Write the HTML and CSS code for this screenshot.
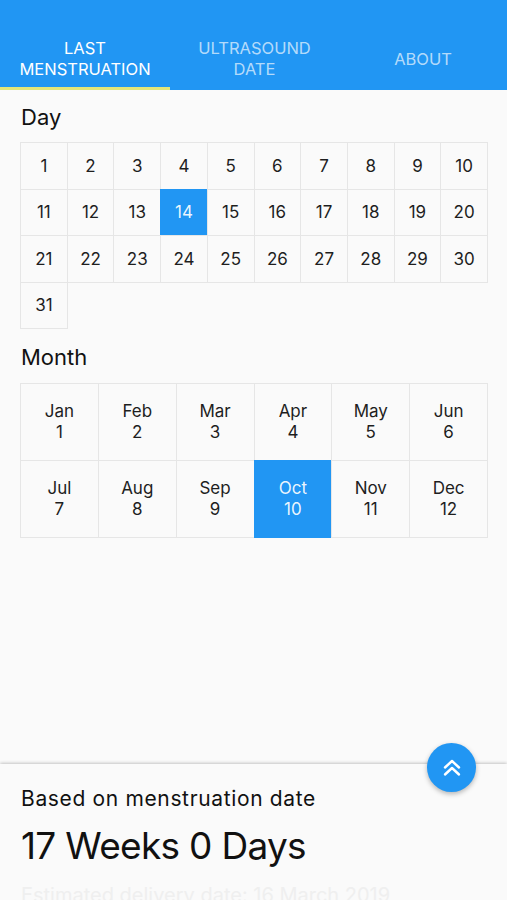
FILE: index.html
```html
<!DOCTYPE html>
<html lang="en">
<head>
<meta charset="utf-8">
<title>Pregnancy Calculator</title>
<link rel="stylesheet" href="styles.css">
</head>
<body>
<div class="app">
  <header class="tabs">
    <div class="tab active">LAST<br>MENSTRUATION</div>
    <div class="tab">ULTRASOUND<br>DATE</div>
    <div class="tab">ABOUT</div>
  </header>
  <main class="content">
    <div class="label label-day">Day</div>
    <div class="day-grid">
      <div class="cell">1</div><div class="cell">2</div><div class="cell">3</div><div class="cell">4</div><div class="cell">5</div>
      <div class="cell">6</div><div class="cell">7</div><div class="cell">8</div><div class="cell">9</div><div class="cell">10</div>
      <div class="cell">11</div><div class="cell">12</div><div class="cell">13</div><div class="cell selected">14</div><div class="cell">15</div>
      <div class="cell">16</div><div class="cell">17</div><div class="cell">18</div><div class="cell">19</div><div class="cell">20</div>
      <div class="cell">21</div><div class="cell">22</div><div class="cell">23</div><div class="cell">24</div><div class="cell">25</div>
      <div class="cell">26</div><div class="cell">27</div><div class="cell">28</div><div class="cell">29</div><div class="cell">30</div>
      <div class="cell">31</div>
    </div>
    <div class="label label-month">Month</div>
    <div class="month-grid">
      <div class="cell month"><span>Jan</span><span>1</span></div>
      <div class="cell month"><span>Feb</span><span>2</span></div>
      <div class="cell month"><span>Mar</span><span>3</span></div>
      <div class="cell month"><span>Apr</span><span>4</span></div>
      <div class="cell month"><span>May</span><span>5</span></div>
      <div class="cell month"><span>Jun</span><span>6</span></div>
      <div class="cell month"><span>Jul</span><span>7</span></div>
      <div class="cell month"><span>Aug</span><span>8</span></div>
      <div class="cell month"><span>Sep</span><span>9</span></div>
      <div class="cell month selected"><span>Oct</span><span>10</span></div>
      <div class="cell month"><span>Nov</span><span>11</span></div>
      <div class="cell month"><span>Dec</span><span>12</span></div>
    </div>
  </main>
  <footer class="result">
    <button class="fab" aria-label="Expand">
      <svg width="20" height="18" viewBox="0 0 20 18" fill="none" stroke="#fff" stroke-width="2.4" stroke-linecap="round" stroke-linejoin="round">
        <path d="M3 8.5 L10 2 L17 8.5"/>
        <path d="M3 15.5 L10 9 L17 15.5"/>
      </svg>
    </button>
    <div class="based">Based on menstruation date</div>
    <div class="weeks">17 Weeks 0 Days</div>
    <div class="faded">Estimated delivery date: 16 March 2019</div>
  </footer>
</div>
</body>
</html>
```
FILE: styles.css
```css
* { box-sizing: border-box; }
html, body { margin: 0; padding: 0; }
body {
  background: #fafafa;
  font-family: Inter, "Liberation Sans", sans-serif;
  color: #1a1a1a;
  width: 507px;
  height: 900px;
  overflow: hidden;
}
.app {
  display: flex;
  flex-direction: column;
  height: 900px;
}
.tabs {
  background: #2196f3;
  padding-top: 26px;
  display: grid;
  grid-template-columns: 170px 169px 168px;
}
.tab {
  height: 64px;
  display: flex;
  align-items: center;
  justify-content: center;
  text-align: center;
  font-size: 16.5px;
  line-height: 21px;
  padding-top: 2px;
  color: rgba(255, 255, 255, 0.68);
}
.tab.active {
  color: #fff;
  box-shadow: inset 0 -3px 0 #e4e67a;
}
.content {
  flex: 1;
  padding: 0 19px 0 20px;
}
.label {
  font-size: 22px;
  line-height: 26px;
  color: #111;
}
.label-day { margin: 14px 0 12px 1px; }
.label-month { margin: 15px 0 13px 1px; }
.day-grid,
.month-grid {
  display: grid;
  padding: 1px 0 0 1px;
}
.day-grid {
  grid-template-columns: repeat(10, 1fr);
  grid-auto-rows: 46.5px;
}
.month-grid {
  grid-template-columns: repeat(6, 1fr);
  grid-auto-rows: 77px;
}
.cell {
  margin: -1px 0 0 -1px;
  border: 1px solid #e6e6e6;
  display: flex;
  align-items: center;
  justify-content: center;
  font-size: 17px;
  color: #1e1e1e;
}
.cell.month {
  flex-direction: column;
  line-height: 21px;
}
.cell.selected {
  background: #2196f3;
  border-color: #2196f3;
  color: rgba(255, 255, 255, 0.92);
}
.result {
  position: relative;
  height: 136px;
  padding: 22px 20px 0 21px;
  background: #fafafa;
  box-shadow: 0 -1px 3px rgba(0, 0, 0, 0.22);
}
.fab {
  position: absolute;
  top: -21px;
  right: 31px;
  width: 49px;
  height: 49px;
  border: 0;
  border-radius: 50%;
  background: #2196f3;
  box-shadow: 0 2px 5px rgba(0, 0, 0, 0.28);
  display: flex;
  align-items: center;
  justify-content: center;
  padding: 0;
}
.based {
  font-size: 21px;
  line-height: 26px;
  letter-spacing: 0.65px;
  color: #111;
}
.weeks {
  margin-top: 12px;
  font-size: 37px;
  line-height: 44px;
  letter-spacing: -0.7px;
  color: #111;
}
.faded {
  margin-top: 14px;
  font-size: 20px;
  line-height: 26px;
  color: #efefef;
}
```
